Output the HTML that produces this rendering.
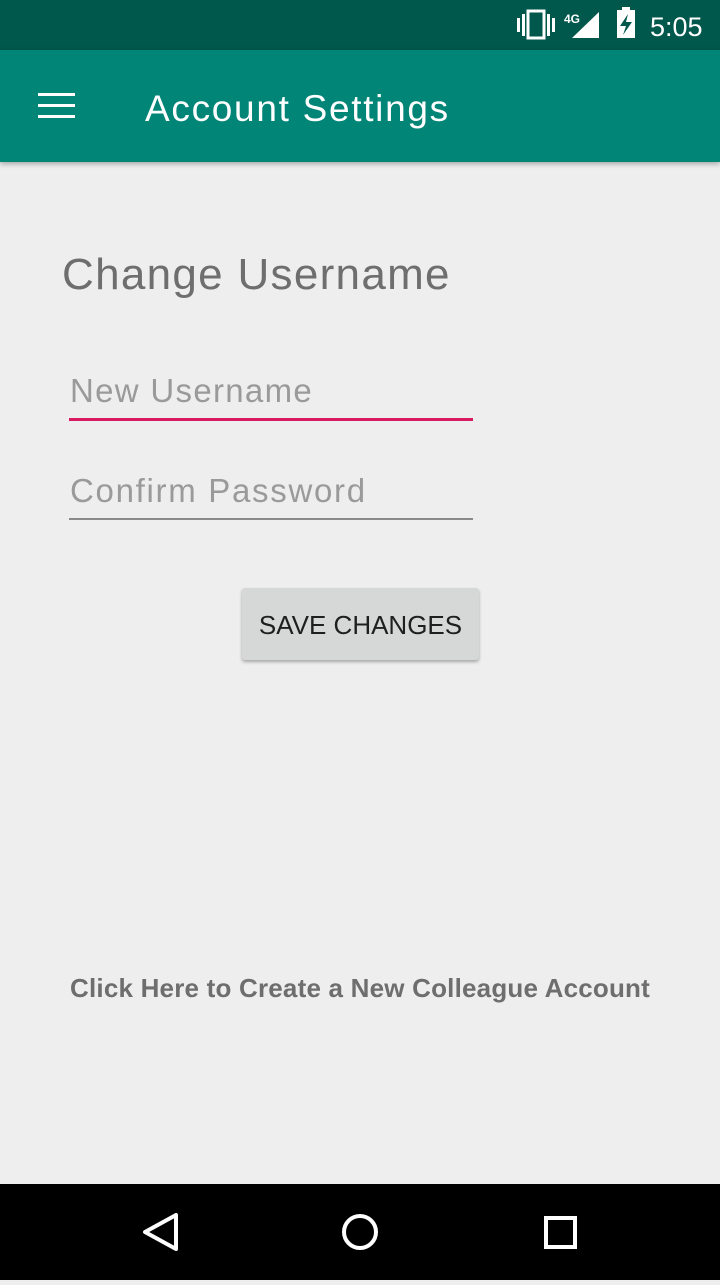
<!DOCTYPE html>
<html><head><style>
*{margin:0;padding:0;box-sizing:border-box}
body{width:720px;height:1280px;background:#eeeeee;font-family:"Liberation Sans",sans-serif;position:relative;overflow:hidden}
.sb{position:absolute;top:0;left:0;width:720px;height:50px;background:#00574b}
.tb{position:absolute;top:50px;left:0;width:720px;height:112px;background:#008577;box-shadow:0 2px 5px rgba(0,0,0,.3)}
.title{position:absolute;left:145px;top:88px;color:#fff;font-size:37px;letter-spacing:1.7px}
.h{position:absolute;left:62px;top:250px;font-size:44px;color:#6e6e6e;letter-spacing:1.3px}
.in{position:absolute;left:70px;font-size:33px;color:#9a9a9a}
.line{position:absolute;left:69px;width:404px}
.btn{position:absolute;left:242px;top:588px;width:237px;height:72px;background:#d6d7d7;border-radius:3px;box-shadow:0 2px 3px rgba(0,0,0,.3);font-size:26px;color:#1f1f1f;text-align:center;line-height:74px}
.link{position:absolute;left:70px;top:973px;font-size:26px;font-weight:bold;color:#6e6e6e;letter-spacing:0.2px}
.nav{position:absolute;top:1184px;left:0;width:720px;height:96px;background:#000}
</style></head><body>
<div class="sb">
<svg width="720" height="50" style="position:absolute;left:0;top:0">
<g fill="#fff">
<rect x="517" y="18" width="3" height="14"/><rect x="522" y="14" width="3" height="22"/>
<rect x="528" y="11" width="16" height="27" fill="none" stroke="#fff" stroke-width="3"/>
<rect x="547" y="14" width="3" height="22"/><rect x="552" y="18" width="3" height="14"/>
<text x="564" y="23" font-size="12" font-weight="bold" font-family="Liberation Sans">4G</text>
<polygon points="599,12 599,38 572,38"/>
<rect x="617" y="10" width="18" height="28"/><rect x="622" y="7" width="8" height="4"/>
<polygon points="628,14 620,26 626,26 623,35 632,22 626,22" fill="#00574b"/>
<text x="650" y="36" font-size="27" font-family="Liberation Sans">5:05</text>
</g></svg>
</div>
<div class="tb">
<div style="position:absolute;left:38px;top:43px;width:37px;height:3px;background:#fff"></div>
<div style="position:absolute;left:38px;top:54px;width:37px;height:3px;background:#fff"></div>
<div style="position:absolute;left:38px;top:65px;width:37px;height:3px;background:#fff"></div>
</div>
<div class="title">Account Settings</div>
<div class="h">Change Username</div>
<div class="in" style="top:372px;letter-spacing:1.3px">New Username</div>
<div class="line" style="top:418px;height:3px;background:#d81b60"></div>
<div class="in" style="top:472px;letter-spacing:1.7px">Confirm Password</div>
<div class="line" style="top:518px;height:2px;background:#8a8a8a"></div>
<div class="btn">SAVE CHANGES</div>
<div class="link">Click Here to Create a New Colleague Account</div>
<div class="nav">
<svg width="720" height="96">
<polygon points="176,31 176,65 145,48" fill="none" stroke="#fff" stroke-width="4" stroke-linejoin="round"/>
<circle cx="360" cy="48" r="16" fill="none" stroke="#fff" stroke-width="4"/>
<rect x="546" y="34" width="29" height="29" fill="none" stroke="#fff" stroke-width="4"/>
</svg>
</div>
</body></html>
